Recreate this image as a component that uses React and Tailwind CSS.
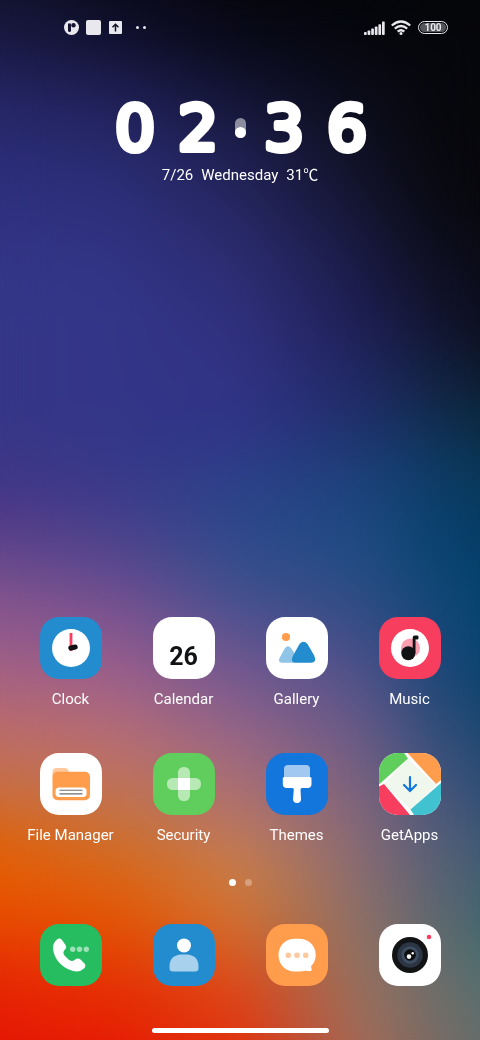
import React from 'react';

const TILE = 'block h-[62px] w-[62px] overflow-hidden rounded-[19px]';

const ClockIcon = () => (
  <svg viewBox="0 0 62 62" className={`${TILE} bg-[#228ccf]`} aria-hidden="true">
    <circle cx="31" cy="31" r="19" fill="#fff" />
    <path d="M31 16v18" stroke="#f83e60" strokeWidth="2.8" />
    <path d="M30.8 31l4.400-1" stroke="#101214" strokeWidth="5" strokeLinecap="round" />
  </svg>
);

const CalendarIcon = () => (
  <span className={`${TILE} bg-white pt-6 text-center text-[25px] leading-8 font-bold text-[#101214]`}>
    26
  </span>
);

const GalleryIcon = () => (
  <svg viewBox="0 0 62 62" className={`${TILE} bg-white`} aria-hidden="true">
    <circle cx="20" cy="20" r="4.1" fill="#ff9d4d" />
    <path d="M19 31q3-3.500 6 0l6 9q3 5.700-3 5.700H16.500q-5 0-3-4.700z" fill="#90c5e7" />
    <path d="M33.500 27q4-4.500 8 0l6.700 11.500q3 7.200-3.200 7.200H29.500q-5.500 0-2.700-6.700z" fill="#228ccf" />
  </svg>
);

const MusicIcon = () => (
  <svg viewBox="0 0 62 62" className={`${TILE} bg-[#f83e5e]`} aria-hidden="true">
    <circle cx="31" cy="31" r="19" fill="#fff" />
    <circle cx="31.500" cy="31" r="9.500" fill="#fb9fb0" />
    <circle cx="29.300" cy="36.300" r="7" fill="#101214" />
    <path d="M33.700 36.300V20.500q0-2 2-2h2.500q1.300 0 1.300 1.300v1.400q0 1.300-1.300 1.300h-1.700v13.800z" fill="#101214" />
  </svg>
);

const FileManagerIcon = () => (
  <svg viewBox="0 0 62 62" className={`${TILE} bg-white`} aria-hidden="true">
    <path d="M12.500 24v-5q0-4 4-4h8.500q3 0 4 4v5z" fill="#fec99f" />
    <rect x="12.500" y="18.700" width="37.500" height="28.500" rx="5" fill="#ff9d4d" />
    <rect x="15.500" y="34.500" width="31" height="9.500" rx="3.500" fill="#fff" />
    <path d="M19.500 37.300h23M19.500 40.900h23" stroke="#6e6e70" strokeWidth="1.100" />
  </svg>
);

const SecurityIcon = () => (
  <svg viewBox="0 0 62 62" className={`${TILE} bg-[#5fce5c]`} aria-hidden="true">
    <rect x="14" y="25" width="34" height="12" rx="5.500" fill="#fff" fillOpacity=".55" />
    <rect x="25" y="14" width="12" height="34" rx="5.500" fill="#fff" fillOpacity=".55" />
    <path d="M25 25h12v12H25z" fill="#fff" />
  </svg>
);

const ThemesIcon = () => (
  <svg viewBox="0 0 62 62" className={`${TILE} bg-[#1276dc]`} aria-hidden="true">
    <path d="M18 25v-9q0-4 4-4h18q4 0 4 4v9z" fill="#a0c8f1" />
    <path d="M18 24h26q1.500 0 1.500 1.500V31q0 4-4 4h-5.500q-1.500 0-1.500 1.500L35 46q0 4-4 4t-4-4l.8-9.500q0-1.500-1.500-1.500h-5.500q-4 0-4-4v-5.500q0-1.500 1.200-1.500z" fill="#fff" />
  </svg>
);

const GetAppsIcon = () => (
  <svg viewBox="0 0 62 62" className={`${TILE} bg-white`} aria-hidden="true">
    <path d="M29 6L57 32 32 57 5 31z" fill="#f0f8ee" />
    <path d="M0 0h25l4 5.500L0 31.500z" fill="#5fce5c" />
    <path d="M28.500 0H62v27l-5 4z" fill="#ff9d4d" />
    <path d="M62 30v32H35l-3.500-5.500z" fill="#41c2d0" />
    <path d="M0 33.500L5 31l26 31H0z" fill="#f83e5e" />
    <path d="M31 24v13M25 32l6 6 6-6" fill="none" stroke="#1276dc" strokeWidth="2.200" strokeLinecap="round" />
  </svg>
);

const PhoneIcon = () => (
  <svg viewBox="0 0 62 62" className={`${TILE} bg-[#26bc60]`} aria-hidden="true">
    <path
      d="M17 15.500Q19.500 13.500 22 16L25.500 21Q27 23.500 25 25.500Q22 28.500 24.500 31.500L28.500 35.500Q31.500 38 34.500 36Q38 33.500 40.500 35.500L44.500 39.500Q46.500 42 44 44.500Q40 48.500 33 47C22 44 13.500 35 13 24Q13 18.500 17 15.500Z"
      fill="#fff"
    />
    <g fill="#fff" fillOpacity=".55">
      <circle cx="32.700" cy="25.300" r="2.700" />
      <circle cx="39.500" cy="25.300" r="2.700" />
      <circle cx="46.300" cy="25.300" r="2.700" />
    </g>
  </svg>
);

const ContactsIcon = () => (
  <svg viewBox="0 0 62 62" className={`${TILE} bg-[#228ccf]`} aria-hidden="true">
    <circle cx="31" cy="21.500" r="7" fill="#fff" />
    <path d="M27.500 30.500h7q11 1 11 12V44q0 3.500-3.500 3.500H20q-3.500 0-3.500-3.500v-1.500q0-11 11-12z" fill="#a7d1ec" />
  </svg>
);

const MessagesIcon = () => (
  <svg viewBox="0 0 62 62" className={`${TILE} bg-[#ff9d4d]`} aria-hidden="true">
    <path d="M29 14.700h4c10 0 16.700 7 16.700 16 0 5-1.700 8.500-4.700 11.500l.7 3.300q0 1.800-1.700 1.800l-5-.5q-2.500.8-6 .8h-4c-10 0-16.500-7.500-16.500-16.500S19 14.700 29 14.700z" fill="#fff" />
    <g fill="#fec99f">
      <circle cx="22.300" cy="31.300" r="2.800" />
      <circle cx="31" cy="31.300" r="2.800" />
      <circle cx="39.700" cy="31.300" r="2.800" />
    </g>
  </svg>
);

const CameraIcon = () => (
  <svg viewBox="0 0 62 62" className={`${TILE} bg-white`} aria-hidden="true">
    <circle cx="31" cy="31" r="18" fill="#111315" />
    <circle cx="31" cy="31" r="12.700" fill="#2b3543" />
    <circle cx="31" cy="31" r="8.700" fill="#3e4d62" />
    <circle cx="31" cy="31" r="5.800" fill="#0d0e10" />
    <circle cx="30" cy="32.600" r="2.300" fill="#fff" />
    <circle cx="33.700" cy="29.300" r="1.200" fill="#fff" />
    <circle cx="50" cy="13" r="2.300" fill="#f83e5e" />
  </svg>
);

const apps = [
  { name: 'Clock', Icon: ClockIcon },
  { name: 'Calendar', Icon: CalendarIcon },
  { name: 'Gallery', Icon: GalleryIcon },
  { name: 'Music', Icon: MusicIcon },
  { name: 'File Manager', Icon: FileManagerIcon },
  { name: 'Security', Icon: SecurityIcon },
  { name: 'Themes', Icon: ThemesIcon },
  { name: 'GetApps', Icon: GetAppsIcon },
];

const dock = [
  { name: 'Phone', Icon: PhoneIcon },
  { name: 'Contacts', Icon: ContactsIcon },
  { name: 'Messages', Icon: MessagesIcon },
  { name: 'Camera', Icon: CameraIcon },
];

// Vertical gradients that fade into each other from left to right, softened by a blur on top
const Wallpaper = () => (
  <div className="absolute inset-0 -z-10" aria-hidden="true">
    <div className="absolute inset-0 bg-[linear-gradient(#141530,#1a1a46,#22235c,#28296b,#2b2d78,#2f3180,#323484,#343687,#353788,#363788,#363788,#393787,#413787,#533b88,#684a8c,#84548d,#955b8b,#a9637f,#b86a6e,#c26f58,#cd6c36,#de630e,#e65a02,#e84a02,#e73304,#e62205,#e61704)]" />
    <div className="absolute inset-0 bg-[linear-gradient(#0b0b1c,#111130,#1c1c4c,#232461,#292b70,#2d2f7a,#303281,#323486,#333588,#333588,#333588,#353788,#38398a,#45408a,#56468f,#72508f,#8a5890,#9d6089,#b06a7c,#bb7169,#c2744f,#cc7030,#dd6312,#e25603,#e44004,#e52c04,#e61c04)] mask-[linear-gradient(to_right,transparent_0%,black_25%)]" />
    <div className="absolute inset-0 bg-[linear-gradient(#07070f,#090a18,#10112c,#181a40,#1f2050,#25265f,#2a2a6b,#2d2e75,#30307c,#313282,#313385,#2e3787,#2c4189,#2c478a,#344d8c,#44508f,#5f5490,#77598f,#8e628a,#a06a80,#ae7170,#bf7a5c,#cc7d42,#d07134,#d95a22,#dd4418,#e0330f)] mask-[linear-gradient(to_right,transparent_25%,black_50%)]" />
    <div className="absolute inset-0 bg-[linear-gradient(#05060b,#06070e,#090a14,#0d0e1d,#101126,#141530,#18193e,#1b1c4a,#1d1e52,#20255f,#202b67,#1e3670,#1d427b,#1e4780,#224c84,#2f4c85,#404e87,#52528a,#645887,#725e83,#7e647c,#876a77,#8a6c70,#8c7068,#917162,#99705e,#a46957)] mask-[linear-gradient(to_right,transparent_50%,black_75%)]" />
    <div className="absolute inset-0 bg-[linear-gradient(#05060a,#06070c,#07080f,#08090f,#0a0a12,#0b0c17,#0e0f20,#12132b,#151737,#152044,#15294f,#123560,#113f6d,#0d4270,#104776,#184979,#20477c,#2b4a7c,#3a4f7d,#475480,#545a7b,#5f5f79,#656472,#69686f,#6f6c6a,#7a6d66,#846a60)] mask-[linear-gradient(to_right,transparent_75%,black_87.5%)]" />
    <div className="absolute inset-0 bg-[linear-gradient(#06070b,#06070b,#06070b,#06070b,#07070c,#08080d,#090a12,#0b0c18,#0c0e1d,#0d1628,#0b2436,#0a2f48,#083858,#063b62,#043f69,#04436e,#06456f,#0b446e,#17466f,#244a72,#304f76,#3b5875,#3f6072,#41666f,#4a6d70,#58706f,#646c6c)] mask-[linear-gradient(to_right,transparent_87.5%,black_100%)]" />
    <div className="absolute inset-0 backdrop-blur-xl" />
  </div>
);

const StatusBar = () => (
  <header className="flex h-[15px] items-center justify-between pr-8 pl-16 text-[#e8e8ee]">
    <div className="flex items-center">
      <svg viewBox="0 0 15 15" className="h-[15px] w-[15px]" aria-hidden="true">
        <circle cx="7.500" cy="7.500" r="7.500" fill="currentColor" />
        <path d="M4 3.500h3v7.800q-1.500 1.500-3 0z" fill="#15152f" />
        <circle cx="9.500" cy="5.300" r="2.200" fill="#15152f" />
      </svg>
      <span className="ml-[7px] h-[15px] w-[15px] rounded-xs bg-current" />
      <svg viewBox="0 0 13 13" className="ml-2 h-[13px] w-[13px]" aria-hidden="true">
        <rect width="13" height="13" rx="1" fill="currentColor" />
        <path d="M6.500 10.500V3.500M3.500 6.300l3-3 3 3" fill="none" stroke="#12122a" strokeWidth="1.500" />
      </svg>
      <span className="ml-[14px] h-[3px] w-[3px] rounded-full bg-current" />
      <span className="ml-1 h-[3px] w-[3px] rounded-full bg-current" />
    </div>
    <div className="flex items-center">
      <svg viewBox="0 0 21 14" className="h-[14px] w-[21px]" fill="currentColor" aria-hidden="true">
        <rect x="0" y="11" width="2.700" height="3" rx=".8" />
        <rect x="3.600" y="9.500" width="2.700" height="4.500" rx=".8" />
        <rect x="7.200" y="7.500" width="2.700" height="6.500" rx=".8" />
        <rect x="10.800" y="5.500" width="2.700" height="8.500" rx=".8" />
        <rect x="14.400" y="3.200" width="2.700" height="10.800" rx=".8" />
        <rect x="18" y="0.500" width="2.700" height="13.500" rx=".8" />
      </svg>
      <svg viewBox="0 0 20 15" className="ml-[6px] h-[15px] w-5" fill="none" stroke="currentColor" strokeWidth="2.300" aria-hidden="true">
        <path d="M.8 5.500q9.200-8 18.400 0M3.800 8.700q6.200-5.400 12.400 0M6.700 11.700q3.300-2.800 6.600 0" />
        <circle cx="10" cy="13.500" r="1.500" fill="currentColor" stroke="none" />
      </svg>
      <span className="ml-[7px] flex h-[13px] w-[30px] items-center justify-center rounded-full border border-current p-px">
        <span className="h-full w-full rounded-full bg-[#55555c] text-center text-[10px] leading-[9px] font-bold">100</span>
      </span>
    </div>
  </header>
);

// The round-joined outline gives the digits their soft ends
const Digit = ({ children }) => (
  <svg viewBox="0 0 63 79" className="h-[79px] w-[63px] overflow-visible">
    <text
      x="32"
      y="62"
      textAnchor="middle"
      fill="#fff"
      stroke="#fff"
      strokeWidth="6"
      strokeLinejoin="round"
      className="font-['DejaVu_Sans',sans-serif] text-[63px]"
    >
      {children}
    </text>
  </svg>
);

const ClockWidget = () => (
  <section className="mt-[53px] flex flex-col items-center text-white">
    <div className="flex items-center">
      <Digit>0</Digit>
      <Digit>2</Digit>
      <span className="flex h-5 w-[23px] justify-center">
        <span className="flex w-[11px] items-end rounded-full bg-white/50">
          <span className="h-[11px] w-[11px] rounded-full bg-white" />
        </span>
      </span>
      <Digit>3</Digit>
      <Digit>6</Digit>
    </div>
    <p className="-mt-0.5 flex gap-2 text-[15px] leading-5">
      <span>7/26</span>
      <span>Wednesday</span>
      <span>31℃</span>
    </p>
  </section>
);

const App = () => (
  <main className="relative isolate flex min-h-screen flex-col pt-5 font-['Roboto','Noto_Sans_CJK_SC',sans-serif]">
    <Wallpaper />
    <StatusBar />
    <ClockWidget />
    <div className="mt-auto grid grid-cols-4 gap-y-11 px-[14px]">
      {apps.map(({ name, Icon }) => (
        <button key={name} type="button" className="flex flex-col items-center gap-[10px] text-[15px] leading-5 whitespace-nowrap text-white">
          <Icon />
          {name}
        </button>
      ))}
    </div>
    <div className="mt-[34px] flex justify-center gap-[9px]">
      <span className="h-[7px] w-[7px] rounded-full bg-white" />
      <span className="h-[7px] w-[7px] rounded-full bg-white/30" />
    </div>
    <nav className="mt-[38px] grid grid-cols-4 px-[14px]">
      {dock.map(({ name, Icon }) => (
        <button key={name} type="button" aria-label={name} className="flex justify-center">
          <Icon />
        </button>
      ))}
    </nav>
    <div className="mx-auto mt-[42px] mb-[7px] h-[5px] w-[177px] rounded-full bg-white" />
  </main>
);

export default App;
